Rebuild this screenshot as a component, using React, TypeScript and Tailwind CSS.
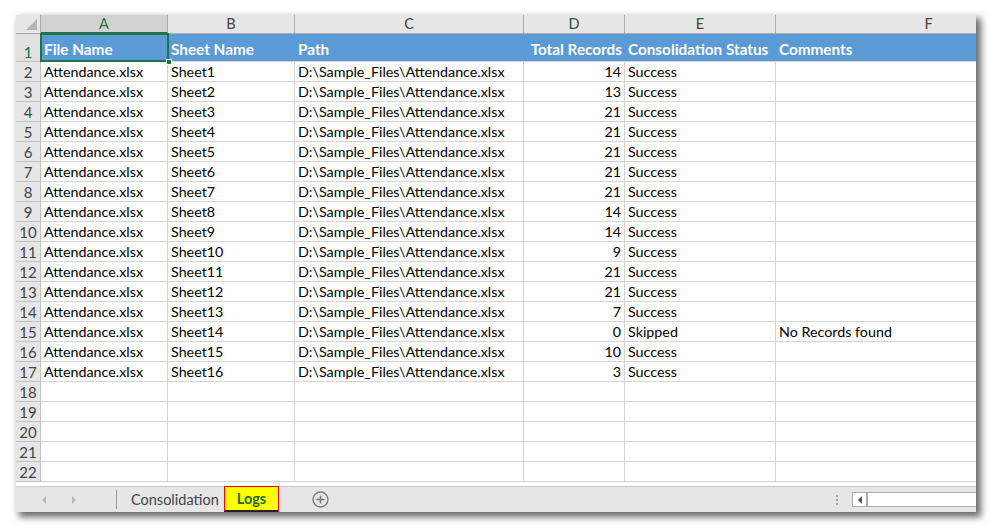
import React from "react";

const data: [string, number, string, string][] = [
  ["Sheet1", 14, "Success", ""],
  ["Sheet2", 13, "Success", ""],
  ["Sheet3", 21, "Success", ""],
  ["Sheet4", 21, "Success", ""],
  ["Sheet5", 21, "Success", ""],
  ["Sheet6", 21, "Success", ""],
  ["Sheet7", 21, "Success", ""],
  ["Sheet8", 14, "Success", ""],
  ["Sheet9", 14, "Success", ""],
  ["Sheet10", 9, "Success", ""],
  ["Sheet11", 21, "Success", ""],
  ["Sheet12", 21, "Success", ""],
  ["Sheet13", 7, "Success", ""],
  ["Sheet14", 0, "Skipped", "No Records found"],
  ["Sheet15", 10, "Success", ""],
  ["Sheet16", 3, "Success", ""],
];

const cell = "border-r border-b border-[#d4d4d4] h-[20px] flex items-end pb-0 px-[3px] whitespace-nowrap overflow-hidden";
const rowHead = "border-r border-b border-[#c0c0c0] bg-[#e6e6e6] h-[20px] flex items-end justify-center pb-0 text-[#444] text-[15px]";

export default function App() {
  const rows: React.ReactNode[] = [];
  for (let i = 0; i < 21; i++) {
    const r = i + 2;
    const d = data[i];
    rows.push(
      <React.Fragment key={r}>
        <div className={rowHead}>{r}</div>
        <div className={cell}>{d ? "Attendance.xlsx" : ""}</div>
        <div className={cell}>{d ? d[0] : ""}</div>
        <div className={cell}>{d ? "D:\\Sample_Files\\Attendance.xlsx" : ""}</div>
        <div className={cell + " justify-end"}>{d ? d[1] : ""}</div>
        <div className={cell}>{d ? d[2] : ""}</div>
        <div className={cell}>{d ? d[3] : ""}</div>
      </React.Fragment>
    );
  }
  const colHead = "h-[19px] flex items-center justify-center border-r border-b border-[#ababab] bg-[#e6e6e6] text-[#444] text-[14.5px]";
  const hcell = "h-[28px] flex items-end pb-[3px] px-[3px] bg-[#5b9bd5] text-white font-bold text-[15.3px] whitespace-nowrap border-b border-[#d4d4d4]";
  return (
    <div className="w-[993px] h-[529px] bg-white pt-[15px] pl-[16px]" style={{ fontFamily: "Lato, 'Liberation Sans', sans-serif" }}>
      <div className="w-[960px] h-[497px] flex flex-col bg-white shadow-[4px_4px_7px_1px_rgba(0,0,0,0.6)] text-[14.3px] text-black leading-[18px]">
        <div className="flex-1 overflow-hidden">
          <div className="grid grid-cols-[25px_127px_127px_229px_101px_151px_306px] content-start w-[1066px]">
            <div className="h-[19px] border-r border-b border-[#ababab] bg-[#e6e6e6] relative">
              <div className="absolute right-[3px] bottom-[3px] w-0 h-0 border-l-[11px] border-l-transparent border-b-[11px] border-b-[#b4b4b4]" />
            </div>
            <div className="h-[19px] flex items-center justify-center border-r border-[#ababab] border-b-2 border-b-[#217346] bg-[#d2d2d2] text-[#217346] text-[14.5px]">A</div>
            <div className={colHead}>B</div>
            <div className={colHead}>C</div>
            <div className={colHead}>D</div>
            <div className={colHead}>E</div>
            <div className={colHead}>F</div>

            <div className="h-[28px] border-r border-b border-[#c0c0c0] bg-[#e1e1e1] flex items-end justify-center pb-0 text-[#217346] text-[15px]">1</div>
            <div className={hcell + " relative"}>
              File Name
              <div className="absolute -left-[1px] -top-[1px] right-[-1px] bottom-[-1px] border-2 border-[#217346]" />
              <div className="absolute right-[-4px] bottom-[-4px] w-[6px] h-[6px] bg-[#217346] border border-white" />
            </div>
            <div className={hcell}>Sheet Name</div>
            <div className={hcell}>Path</div>
            <div className={hcell + " justify-end"}>Total Records</div>
            <div className={hcell}>Consolidation Status</div>
            <div className={hcell}>Comments</div>
            {rows}
          </div>
        </div>
        <div className="h-[26px] shrink-0 flex items-stretch bg-[#e6e6e6] border-t border-[#c6c6c6] text-[#444] text-[14.5px]">
          <div className="w-[100px] flex items-center">
            <div className="ml-[26px] w-0 h-0 border-y-[4px] border-y-transparent border-r-[4px] border-r-[#b8b8b8]" />
            <div className="ml-[26px] w-0 h-0 border-y-[4px] border-y-transparent border-l-[4px] border-l-[#b8b8b8]" />
          </div>
          <div className="w-px bg-[#999] my-[3px]" />
          <div className="w-[107px] flex items-center pl-[14px]">Consolidation</div>
          <div className="w-[55px] bg-[#ffff00] border-[1.5px] border-[#ff0000] border-b-[2px] border-b-[#222] text-[#1f6e1f] font-bold flex items-center justify-center -mt-px">Logs</div>
          <div className="w-[82px] flex items-center justify-center">
            <svg width="17" height="17" viewBox="0 0 17 17">
              <circle cx="8.5" cy="8.5" r="7.5" fill="none" stroke="#7a7a7a" strokeWidth="1.3" />
              <path d="M8.5 4.5v8M4.5 8.5h8" stroke="#7a7a7a" strokeWidth="1.6" />
            </svg>
          </div>
          <div className="flex-1 flex items-center justify-end">
            <div className="flex flex-col gap-[2px] mr-[14px]">
              <div className="w-[2px] h-[2px] bg-[#a0a0a0]" />
              <div className="w-[2px] h-[2px] bg-[#a0a0a0]" />
              <div className="w-[2px] h-[2px] bg-[#a0a0a0]" />
            </div>
            <div className="w-[124px] h-[15px] bg-white border border-[#ababab] border-r-0 flex">
              <div className="w-[15px] border-r-2 border-[#ababab] flex items-center justify-center">
                <div className="w-0 h-0 border-y-[4px] border-y-transparent border-r-[4px] border-r-[#555]" />
              </div>
            </div>
          </div>
        </div>
      </div>
    </div>
  );
}
